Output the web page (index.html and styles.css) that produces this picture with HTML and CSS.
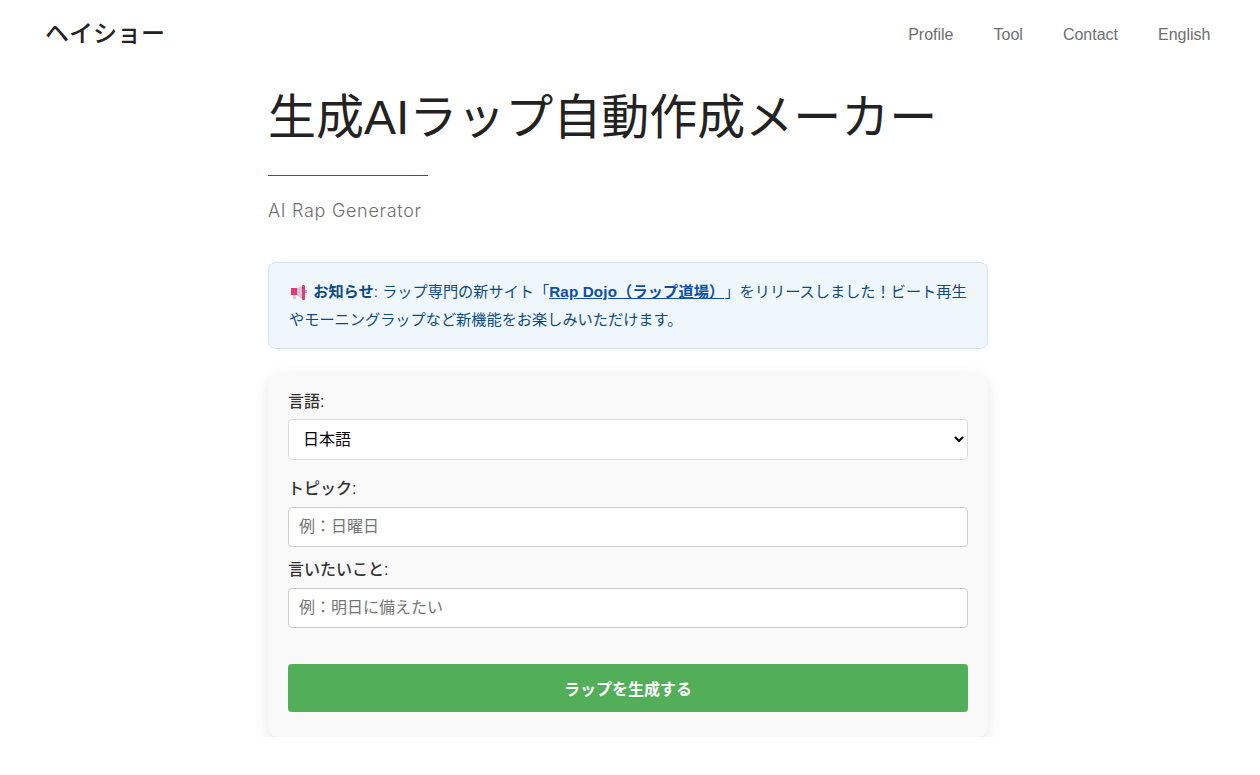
FILE: index.html
```html
<!DOCTYPE html>
<html lang="ja">
<head>
    <meta charset="UTF-8">
    <meta name="viewport" content="width=device-width, initial-scale=1.0">
    <title>生成AIラップ自動作成メーカー</title>
    <link rel="stylesheet" href="styles.css">
</head>
<body>
    <header class="site-header">
        <a class="logo" href="#">ヘイショー</a>
        <nav class="site-nav">
            <a href="#">Profile</a>
            <a href="#">Tool</a>
            <a href="#">Contact</a>
            <a href="#">English</a>
        </nav>
    </header>

    <main class="content">
        <h1>生成AIラップ自動作成メーカー</h1>
        <hr class="title-rule">
        <p class="subtitle">AI Rap Generator</p>

        <div class="notice">
            <svg class="notice-icon" viewBox="0 0 17 15" aria-hidden="true">
                <rect x="1" y="3" width="6" height="7" fill="#e8386d"/>
                <rect x="3" y="10" width="3" height="4" fill="#d2ccd8"/>
                <path d="M7 3 L12 1 V14 L7 10 Z" fill="#cdc6dd"/>
                <rect x="12" y="0" width="3" height="15" rx="1" fill="#e8386d"/>
                <rect x="15" y="5" width="2" height="3" fill="#a9a3b0"/>
            </svg>
            <strong>お知らせ</strong>: ラップ専門の新サイト「<a href="#">Rap Dojo（ラップ道場）</a>」をリリースしました！ビート再生やモーニングラップなど新機能をお楽しみいただけます。
        </div>

        <form class="rap-form">
            <label for="language">言語:</label>
            <select id="language" class="language-select">
                <option>日本語</option>
            </select>

            <label for="topic" class="label-topic">トピック:</label>
            <input type="text" id="topic" placeholder="例：日曜日">

            <label for="message" class="label-message">言いたいこと:</label>
            <input type="text" id="message" placeholder="例：明日に備えたい">

            <button type="button">ラップを生成する</button>
        </form>
    </main>
</body>
</html>
```
FILE: styles.css
```css
* {
    box-sizing: border-box;
}
body {
    margin: 0;
    background-color: #fff;
    color: #222;
    font-family: "Liberation Sans", "Noto Sans CJK JP", sans-serif;
}
.site-header {
    display: flex;
    justify-content: space-between;
    align-items: center;
    height: 68px;
    padding: 0 49.5px 0 45px;
}
.logo {
    margin-bottom: 6px;
    color: #222;
    font-size: 24px;
    font-weight: 500;
    text-decoration: none;
}
.site-nav {
    display: flex;
    gap: 40px;
    margin-top: 2px;
}
.site-nav a {
    color: #6e6e6e;
    font-size: 16px;
    text-decoration: none;
}
.content {
    width: 720px;
    margin-left: 268px;
}
h1 {
    margin: 17px 0 0;
    font-size: 48px;
    font-weight: 400;
    line-height: 66px;
    white-space: nowrap;
}
.title-rule {
    width: 160px;
    height: 1px;
    margin: 24px 0 0;
    border: 0;
    background-color: #a0284f;
}
.subtitle {
    margin: 25px 0 0;
    color: #6f6f6f;
    font-family: "Inter", sans-serif;
    font-size: 18px;
    font-weight: 300;
    letter-spacing: 0.7px;
    line-height: 20px;
}
.notice {
    margin-top: 41px;
    padding: 15px 20px 14px;
    border: 1px solid #cfe6f7;
    border-radius: 8px;
    background-color: #eff7fd;
    color: #0d4a80;
    font-size: 15.2px;
    line-height: 28px;
    text-spacing-trim: space-all;
}
.notice-icon {
    width: 17px;
    height: 15px;
    margin: 0 2px 0 1px;
    vertical-align: -3px;
}
.notice a {
    color: #0d4ea6;
    font-weight: 700;
    letter-spacing: 0.15px;
}
.rap-form {
    margin-top: 25px;
    padding: 15px 20px 25px;
    border-radius: 10px;
    background-color: #f9f9f9;
    box-shadow: 0 4px 15px rgba(0, 0, 0, 0.1);
}
label {
    display: block;
    color: #333;
    font-size: 16px;
    font-weight: 500;
    line-height: 26px;
}
.label-topic {
    margin-top: 16px;
}
.label-message {
    margin-top: 10px;
}
select, input {
    display: block;
    width: 100%;
    background-color: #fff;
    font-family: inherit;
    font-size: 16px;
}
.language-select {
    height: 41px;
    margin-top: 4px;
    padding: 0 10px;
    border: 1px solid #ddd;
    border-radius: 4px;
    color: #000;
}
input {
    height: 40px;
    margin-top: 5px;
    padding: 0 10px;
    border: 1px solid #ccc;
    border-radius: 4px;
}
input::placeholder {
    color: #757575;
}
button {
    display: block;
    width: 100%;
    height: 48px;
    margin-top: 36px;
    border: none;
    border-radius: 4px;
    background-color: #53ae5a;
    color: #fff;
    font-family: inherit;
    font-size: 16px;
    font-weight: 700;
}
```
